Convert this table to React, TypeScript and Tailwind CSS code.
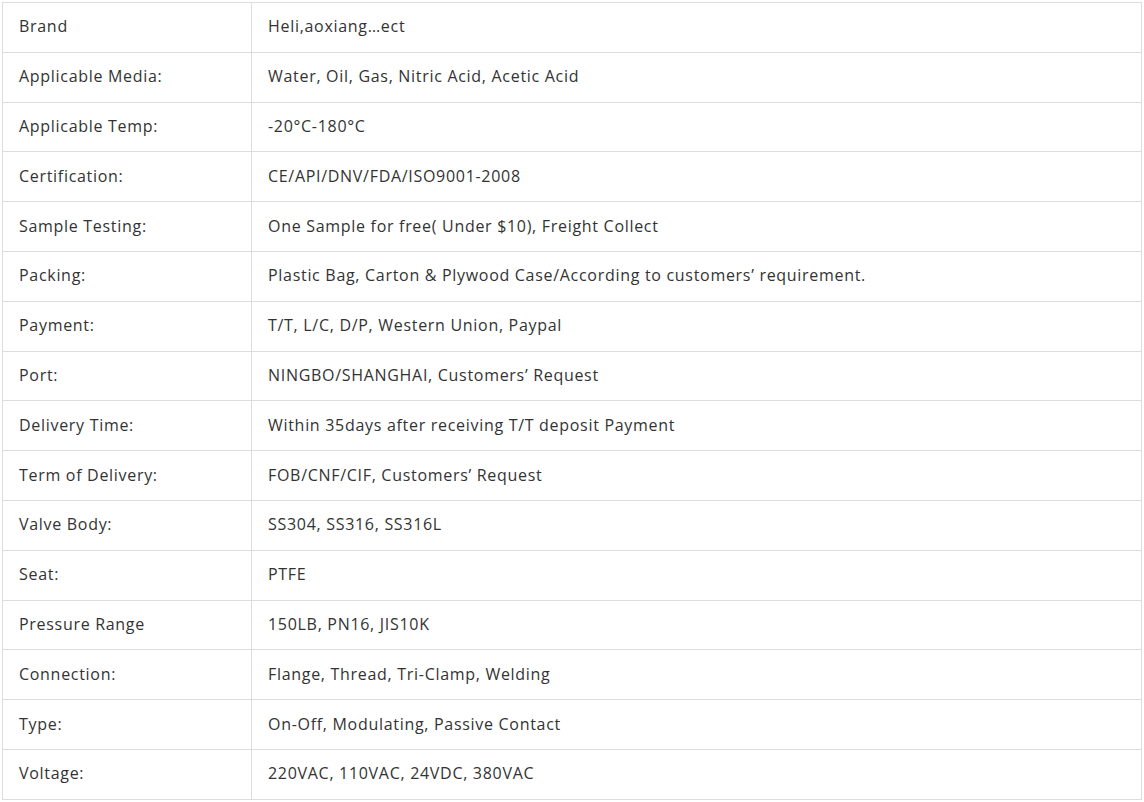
import React from "react";

const rows: [string, string][] = [
  ["Brand", "Heli,aoxiang…ect"],
  ["Applicable Media:", "Water, Oil, Gas, Nitric Acid, Acetic Acid"],
  ["Applicable Temp:", "-20°C-180°C"],
  ["Certification:", "CE/API/DNV/FDA/ISO9001-2008"],
  ["Sample Testing:", "One Sample for free( Under $10), Freight Collect"],
  ["Packing:", "Plastic Bag, Carton & Plywood Case/According to customers’ requirement."],
  ["Payment:", "T/T, L/C, D/P, Western Union, Paypal"],
  ["Port:", "NINGBO/SHANGHAI, Customers’ Request"],
  ["Delivery Time:", "Within 35days after receiving T/T deposit Payment"],
  ["Term of Delivery:", "FOB/CNF/CIF, Customers’ Request"],
  ["Valve Body:", "SS304, SS316, SS316L"],
  ["Seat:", "PTFE"],
  ["Pressure Range", "150LB, PN16, JIS10K"],
  ["Connection:", "Flange, Thread, Tri-Clamp, Welding"],
  ["Type:", "On-Off, Modulating, Passive Contact"],
  ["Voltage:", "220VAC, 110VAC, 24VDC, 380VAC"],
];

export default function App() {
  return (
    <div className="w-[1144px] h-[802px] bg-white pt-[2px] pl-[2px]" style={{ fontFamily: '"Open Sans", "Liberation Sans", sans-serif' }}>
      <div className="w-[1140px] border-x border-b border-[#dddddd] text-[16px] tracking-[0.7px] text-[#333333]">
        {rows.map(([k, v], i) => (
          <div key={i} className="flex h-[49.8px] border-t border-[#dddddd]">
            <div className="w-[249px] shrink-0 border-r border-[#dddddd] pl-[16px] pb-[2px] flex items-center">{k}</div>
            <div className="flex-1 pl-[16px] pb-[2px] flex items-center">{v}</div>
          </div>
        ))}
      </div>
    </div>
  );
}
